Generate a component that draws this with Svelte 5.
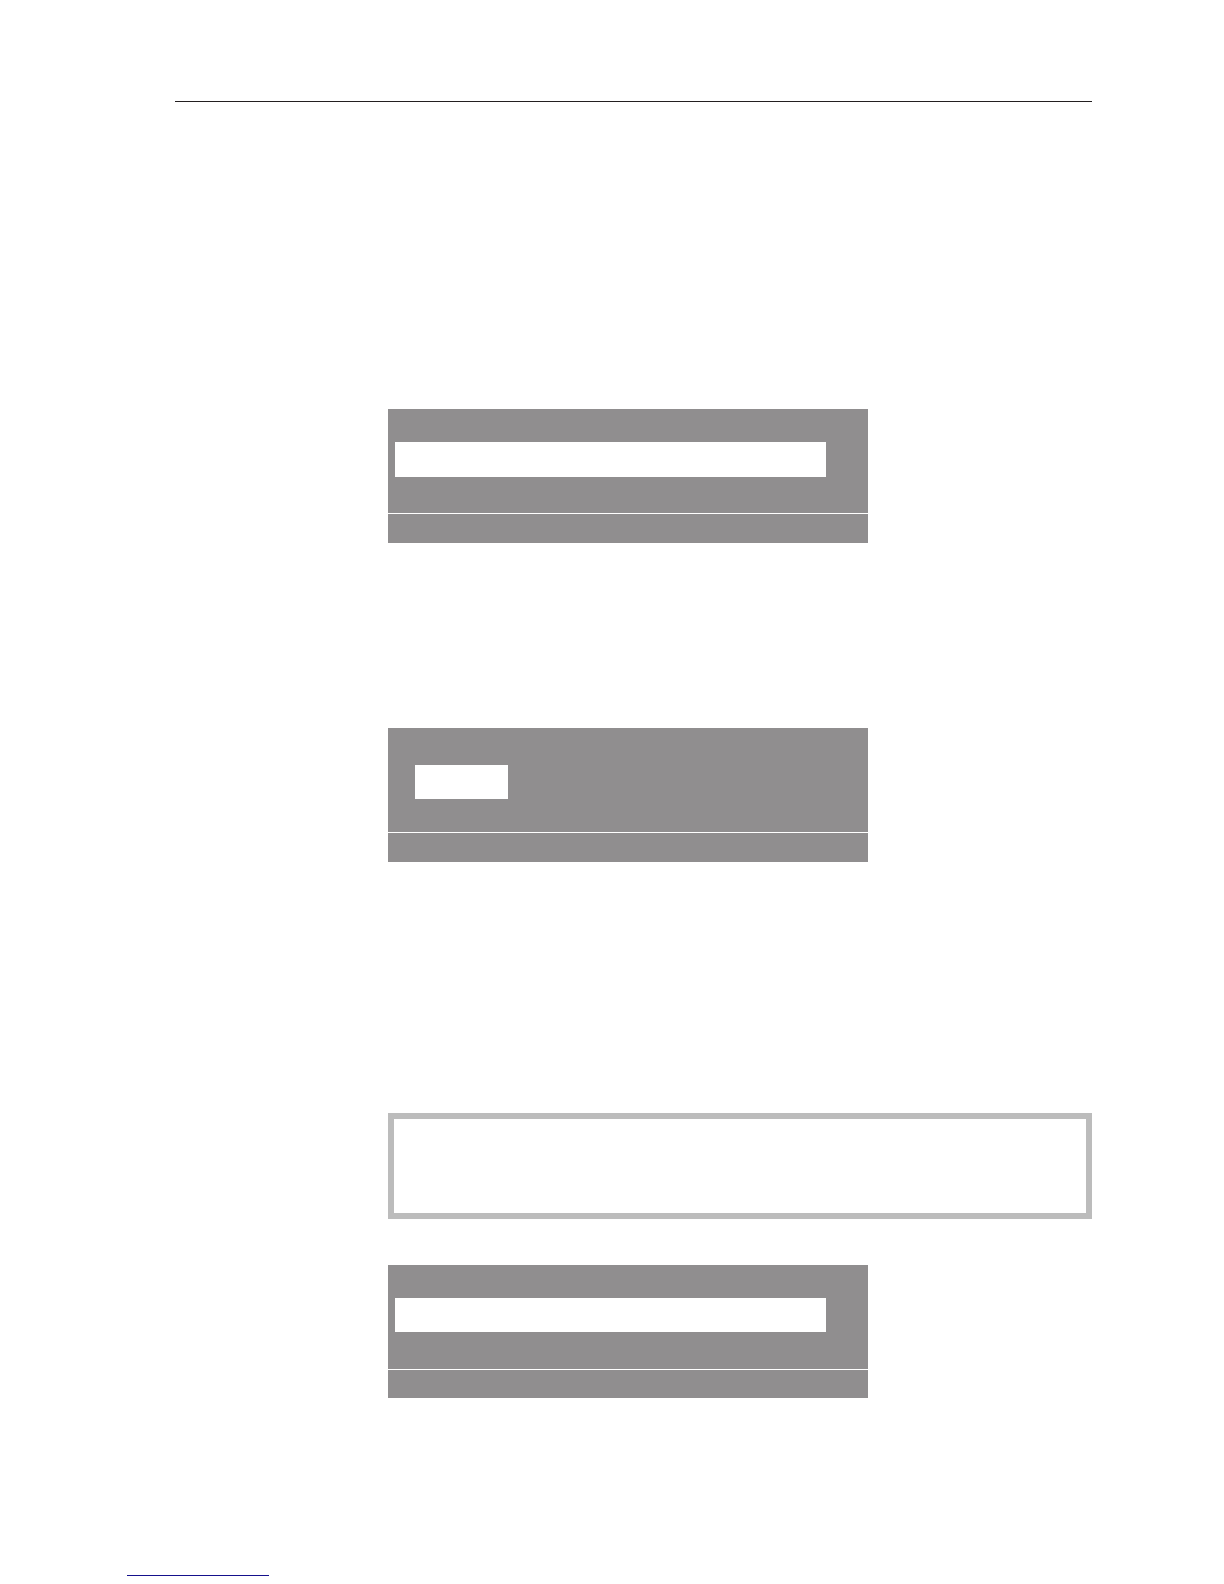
<script>
  const upper = [
    { kind: 'list', size: 'full' },
    { kind: 'value', size: 'full' }
  ];
</script>

{#snippet display(kind, size)}
  <section class="display {kind} {size}">
    <div class="screen"><div class="selection"></div></div>
    <div class="status"></div>
  </section>
{/snippet}

<main class="page">
  <hr class="rule" />
  <div class="column">
    {#each upper as item}
      {@render display(item.kind, item.size)}
    {/each}
    <aside class="note"></aside>
    {@render display('list', 'compact')}
  </div>
  <footer class="footer"><div class="underline"></div></footer>
</main>

<style>
  :global(body) {
    margin: 0;
    background: #fff;
    font-family: "Liberation Sans", sans-serif;
  }

  .page {
    box-sizing: border-box;
    min-height: 100vh;
    padding: 101px 132px 8px 127px;
    display: flex;
    flex-direction: column;
  }

  .rule {
    width: auto;
    height: 1px;
    margin: 0 0 0 48px;
    border: 0;
    background: #231f20;
  }

  .column {
    display: flex;
    flex-direction: column;
    margin: 307px 0 0 261px;
  }

  .display {
    display: flex;
    flex-direction: column;
    gap: 1px;
    width: 100%;
    max-width: 480px;
  }

  .display + .display {
    margin-top: 185px;
  }

  .screen {
    box-sizing: border-box;
    min-height: 104px;
    padding: 33px 42px 36px 7px;
    background: #908e8f;
  }

  .selection {
    height: 35px;
    background: #fff;
  }

  .value .screen {
    padding: 37px 27px 33px;
  }

  .value .selection {
    width: 93px;
    height: 34px;
  }

  .compact .selection {
    height: 34px;
  }

  .status {
    height: 29px;
    background: #908e8f;
  }

  .compact .status {
    height: 28px;
  }

  .note {
    box-sizing: border-box;
    min-height: 106px;
    margin: 251px 0 46px;
    border: 6px solid #bcbcbc;
  }

  .footer {
    margin-top: auto;
  }

  .underline {
    width: 142px;
    height: 1px;
    background: #15118c;
  }
</style>
